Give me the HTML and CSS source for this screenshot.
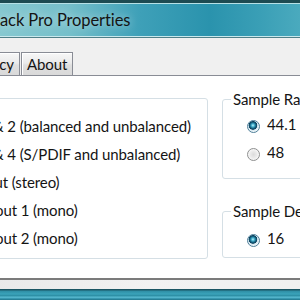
FILE: index.html
```html
<!DOCTYPE html>
<html lang="en">

<head>
    <meta charset="UTF-8">
    <meta name="viewport" content="width=device-width, initial-scale=1.0">
    <title>Fast Track Pro Properties</title>
    <link rel="stylesheet" href="styles.css">
</head>

<body>

    <div class="window">
        <div class="titlebar">
            <span class="title">ack Pro Properties</span>
        </div>

        <div class="tabs">
            <div class="tabs-hidden">
                <div class="tab">Latency</div>
            </div>
            <div class="tab tab-about">About</div>
        </div>

        <div class="panel">
            <fieldset class="group group-streams">
                <label class="row"><span class="check"></span><span class="text">&amp; 2 (balanced and unbalanced)</span></label>
                <label class="row"><span class="check"></span><span class="text">&amp; 4 (S/PDIF and unbalanced)</span></label>
                <label class="row"><span class="check"></span><span class="text text-back">out (stereo)</span></label>
                <label class="row"><span class="check"></span><span class="text text-in">out 1 (mono)</span></label>
                <label class="row"><span class="check"></span><span class="text text-in">out 2 (mono)</span></label>
            </fieldset>

            <div class="side">
                <fieldset class="group group-rate">
                    <legend>Sample Rate</legend>
                    <label class="row"><span class="radio checked"></span>44.1</label>
                    <label class="row"><span class="radio"></span>48</label>
                </fieldset>

                <fieldset class="group group-depth">
                    <legend>Sample Depth</legend>
                    <label class="row"><span class="radio checked"></span>16</label>
                </fieldset>
            </div>
        </div>

        <div class="status"></div>
        <div class="frame-bottom"></div>
    </div>

</body>

</html>
```

FILE: styles.css
```css
body {
    margin: 0;
    overflow: hidden;
    background-color: #f0f0f0;
    font-family: Lato, "Noto Sans", sans-serif;
    font-size: 15px;
    letter-spacing: -0.1px;
    color: #141414;
}

.window {
    width: 420px;
    margin-left: -60px;
}

/* Barra de titulo */
.titlebar {
    height: 34px;
    padding-left: 60px;
    line-height: 34px;
    border-top: 3px solid #1d4b52;
    border-bottom: 1px solid #4f7f88;
    background: linear-gradient(90deg, #86c8d0 60px, #74bfca 130px, #3ea0b8 200px, #2a93ad 270px, #3a9fb6 320px, #4aaabe 360px);
    box-shadow: inset 0 1px 0 #b6e1e6, inset 0 -1px 0 #c9e8ec;
}

.title {
    font-size: 16.5px;
    color: #141414;
    text-shadow: 0 0 8px rgba(255, 255, 255, 0.6);
}

/* Abas */
.tabs {
    display: flex;
    align-items: flex-end;
    height: 37px;
    box-sizing: border-box;
    padding-top: 14px;
}

.tabs-hidden {
    width: 80px;
    display: flex;
    justify-content: flex-end;
}

.tab {
    line-height: 22px;
    padding: 0 5px;
    border: 1px solid #898c95;
    border-bottom: none;
    background: linear-gradient(#f7f7f7, #ebebeb 45%, #dfdfdf 55%, #d9d9d9);
    box-shadow: inset 1px 1px 0 #fff;
}

.tab-about {
    margin-left: 1px;
}

/* Painel */
.panel {
    display: flex;
    align-items: flex-start;
    height: 205px;
    box-sizing: border-box;
    padding: 12px 0 0 26px;
    background-color: #fff;
    border-top: 1px solid #898c95;
    border-bottom: 2px solid #7b7b7b;
}

.group {
    margin: 0;
    min-width: 0;
    box-sizing: border-box;
    border: 1px solid #d5dfe5;
    border-radius: 3px;
}

.group legend {
    margin-left: 8px;
    padding: 0 2px;
    line-height: 20px;
}

.group-streams {
    width: 242px;
    margin-top: 10px;
    padding: 13px 0 6px 10px;
}

.side {
    width: 120px;
    margin: 1px 0 0 14px;
}

.group-rate {
    padding: 1px 0 12px 0;
}

.group-depth {
    margin-top: 22px;
    padding: 3px 0 5px 0;
}

.row {
    display: flex;
    align-items: center;
    height: 28px;
    line-height: 28px;
    white-space: nowrap;
}

.side .row {
    padding-left: 24px;
}

.check {
    flex: none;
    width: 13px;
    height: 13px;
    box-sizing: border-box;
    border: 1px solid #8e8f8f;
    background: linear-gradient(135deg, #dcdcdc, #fafafa);
    margin-right: 3px;
}

.text-back {
    margin-left: -7px;
}

.text-in {
    margin-left: 2px;
}

/* Botoes de opcao */
.radio {
    flex: none;
    width: 13px;
    height: 13px;
    box-sizing: border-box;
    margin: 4px 7px 0 0;
    border-radius: 50%;
    border: 1px solid #8e8f8f;
    background: radial-gradient(circle at 50% 50%, #dcdcdc 0, #e9e9e9 3px, #f7f7f7 5.5px);
}

.radio.checked {
    border-color: #4f7f99;
    background: radial-gradient(circle at 45% 40%, #c4f3fb 0, #45b2cf 1.5px, #13607f 3px, #0d3f5a 4px, #cfe4ee 4.6px, #eef6f9 6px);
}

/* Rodape da janela */
.status {
    height: 9px;
    background: linear-gradient(90deg, #e6e6e6, #f2f2f2 50%, #efefef);
}

.frame-bottom {
    height: 12px;
    background: linear-gradient(#1b5563 0, #1b5563 1px, #2f8ea5 2px, #3aa3ba 5px, #2a8aa0 7px, #5fc1d7 8px, #2b8aa3 10px, #1d6070 12px);
}
```
